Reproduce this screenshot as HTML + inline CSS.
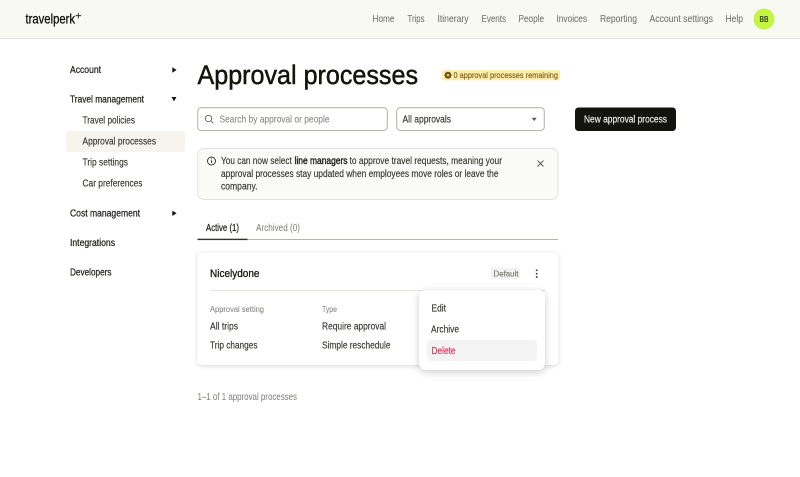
<!DOCTYPE html>
<html lang="en"><head><meta charset="utf-8"><title>Approval processes</title>
<style>
html,body{margin:0;padding:0;background:#fff;width:800px;height:477px;overflow:hidden}
svg{display:block;filter:blur(.25px)}
text{font-family:"Liberation Sans",sans-serif;font-size:9.7px;fill:#72726a;stroke:#72726a;stroke-width:.06;white-space:pre}
.m{fill:#24241f;stroke:#24241f;stroke-width:.24}
.d{fill:#36362f;stroke:#36362f;stroke-width:.14}
.g{fill:#85857e;stroke:#85857e;stroke-width:.06}
</style></head><body>
<svg width="800" height="477" viewBox="0 0 800 477" xmlns="http://www.w3.org/2000/svg">
<defs>
<filter id="s1" x="-10%" y="-10%" width="120%" height="125%"><feDropShadow dx="0" dy="1" stdDeviation="2.5" flood-color="#000" flood-opacity=".16"/></filter>
<filter id="s2" x="-20%" y="-20%" width="140%" height="140%"><feDropShadow dx="0" dy="2" stdDeviation="4" flood-color="#000" flood-opacity=".2"/></filter>
</defs>
<rect width="800" height="38" fill="#f9f9f4"/>
<rect y="38" width="800" height="1" fill="#e6e6e0"/>
<text x="25.5" y="23.5" textLength="49.5" lengthAdjust="spacingAndGlyphs" style="font-size:14px;fill:#14140f;stroke:#14140f;stroke-width:.32">travelperk</text>
<path d="M78.3 13v5.4M75.6 15.700H81" stroke="#14140f" stroke-width=".8" fill="none"/>

<text x="372.5" y="22" textLength="22" lengthAdjust="spacingAndGlyphs">Home</text>
<text x="407.5" y="22" textLength="17" lengthAdjust="spacingAndGlyphs">Trips</text>
<text x="437.5" y="22" textLength="31" lengthAdjust="spacingAndGlyphs">Itinerary</text>
<text x="481.5" y="22" textLength="24.5" lengthAdjust="spacingAndGlyphs">Events</text>
<text x="518.5" y="22" textLength="25.5" lengthAdjust="spacingAndGlyphs">People</text>
<text x="556.5" y="22" textLength="30.5" lengthAdjust="spacingAndGlyphs">Invoices</text>
<text x="600" y="22" textLength="37" lengthAdjust="spacingAndGlyphs">Reporting</text>
<text x="649.5" y="22" textLength="63.5" lengthAdjust="spacingAndGlyphs">Account settings</text>
<text x="725.5" y="22" textLength="17.5" lengthAdjust="spacingAndGlyphs">Help</text>
<circle cx="764" cy="19" r="10.5" fill="#c4f542"/>
<text x="759.5" y="21.8" textLength="9" lengthAdjust="spacingAndGlyphs" style="font-size:8px;font-weight:bold;fill:#33402a;stroke:none">BB</text>

<!-- sidebar -->
<rect x="66" y="131" width="119" height="21" rx="2" fill="#f5f5ee"/>
<text class="m" x="70" y="73" textLength="31" lengthAdjust="spacingAndGlyphs">Account</text>
<text class="m" x="70" y="102.300" textLength="74" lengthAdjust="spacingAndGlyphs">Travel management</text>
<text class="d" x="82.500" y="123.300" textLength="52.500" lengthAdjust="spacingAndGlyphs">Travel policies</text>
<text class="d" x="82.500" y="144.500" textLength="73.500" lengthAdjust="spacingAndGlyphs">Approval processes</text>
<text class="d" x="82.500" y="165.500" textLength="45.500" lengthAdjust="spacingAndGlyphs">Trip settings</text>
<text class="d" x="82.500" y="186.700" textLength="60" lengthAdjust="spacingAndGlyphs">Car preferences</text>
<text class="m" x="70" y="216.300" textLength="70" lengthAdjust="spacingAndGlyphs">Cost management</text>
<text class="m" x="70" y="246" textLength="45" lengthAdjust="spacingAndGlyphs">Integrations</text>
<text class="m" x="70" y="275.500" textLength="41.500" lengthAdjust="spacingAndGlyphs">Developers</text>
<path d="M172.300 67.300l4.300 2.700-4.300 2.700z" fill="#14140f"/>
<path d="M171.500 97l5 0-2.500 4.300z" fill="#14140f"/>
<path d="M172.300 210.600l4.300 2.700-4.300 2.700z" fill="#14140f"/>

<!-- title -->
<text x="197.500" y="84" textLength="220.500" lengthAdjust="spacingAndGlyphs" style="font-size:26.500px;fill:#14140f;stroke:#14140f;stroke-width:.5">Approval processes</text>
<rect x="442" y="70" width="118" height="10.500" rx="2" fill="#fdeeb0"/>
<circle cx="448" cy="75.200" r="3.500" fill="#6d5210"/>
<path d="M446.800 74l2.400 2.400M449.200 74l-2.400 2.400" stroke="#fdeeb0" stroke-width=".7"/>
<text x="453.500" y="78" textLength="104.500" lengthAdjust="spacingAndGlyphs" style="font-size:8.600px;fill:#7f621a;stroke:#7f621a;stroke-width:.16">0 approval processes remaining</text>

<!-- search / select / button -->
<rect x="197.700" y="107.700" width="189.600" height="22.800" rx="3.500" fill="#fff" stroke="#b8b8b0" stroke-width="1.100"/>
<circle cx="208.500" cy="118.500" r="3.200" fill="none" stroke="#66665f" stroke-width=".9"/>
<path d="M210.900 120.900l2.400 2.400" stroke="#66665f" stroke-width=".9"/>
<text x="219.500" y="122.300" textLength="110" lengthAdjust="spacingAndGlyphs" class="g">Search by approval or people</text>
<rect x="396.700" y="107.700" width="147.600" height="22.800" rx="3.500" fill="#fff" stroke="#b8b8b0" stroke-width="1.100"/>
<text class="d" x="402.500" y="122.300" textLength="48.500" lengthAdjust="spacingAndGlyphs">All approvals</text>
<path d="M531.800 117.700h4.800l-2.400 3.400z" fill="#55554f"/>
<rect x="575" y="107.500" width="101" height="23.500" rx="3.500" fill="#14140f"/>
<text x="584" y="122.300" textLength="83" lengthAdjust="spacingAndGlyphs" style="fill:#eeeeea;stroke:#eeeeea;stroke-width:.18">New approval process</text>

<!-- banner -->
<rect x="197.700" y="148.500" width="360.300" height="51" rx="6" fill="#fafaf6" stroke="#e2e2da" stroke-width=".9"/>
<circle cx="211.500" cy="161" r="4" fill="none" stroke="#2c2c28" stroke-width=".9"/>
<path d="M211.500 160.300v2.700" stroke="#2c2c28" stroke-width=".9"/><circle cx="211.500" cy="159" r=".55" fill="#2c2c28"/>
<text class="d" x="221" y="164" textLength="70.800" lengthAdjust="spacingAndGlyphs">You can now select</text>
<text class="m" x="294.500" y="164" textLength="53" lengthAdjust="spacingAndGlyphs" style="stroke-width:.38;fill:#14140f">line managers</text>
<text class="d" x="349.500" y="164" textLength="152.500" lengthAdjust="spacingAndGlyphs">to approve travel requests, meaning your</text>
<text class="d" x="221" y="177" textLength="277.500" lengthAdjust="spacingAndGlyphs">approval processes stay updated when employees move roles or leave the</text>
<text class="d" x="221" y="189.700" textLength="36.500" lengthAdjust="spacingAndGlyphs">company.</text>
<path d="M537.500 160.500l6 6M543.500 160.500l-6 6" stroke="#55554f" stroke-width=".9"/>

<!-- tabs -->
<text class="m" x="206" y="231" textLength="33" lengthAdjust="spacingAndGlyphs">Active (1)</text>
<text x="256" y="231" textLength="44" lengthAdjust="spacingAndGlyphs" class="g">Archived (0)</text>
<rect x="197.500" y="239" width="360.500" height="1" fill="#b5b5aa"/>
<rect x="197.500" y="238.700" width="50" height="1.400" fill="#33332e"/>

<!-- card -->
<rect x="197.500" y="252.500" width="361" height="112.500" rx="5" fill="#fff" filter="url(#s1)"/>
<text x="210" y="277" textLength="49.500" lengthAdjust="spacingAndGlyphs" style="font-size:10.800px;fill:#14140f;stroke:#14140f;stroke-width:.28">Nicelydone</text>
<rect x="491" y="268" width="29" height="11" rx="2" fill="#f2f2f0"/>
<text x="493.500" y="276.400" textLength="25" lengthAdjust="spacingAndGlyphs" style="font-size:8.500px;stroke-width:.12">Default</text>
<circle cx="536.700" cy="270.300" r=".95" fill="#44443f"/><circle cx="536.700" cy="273.700" r=".95" fill="#44443f"/><circle cx="536.700" cy="277" r=".95" fill="#44443f"/>
<rect x="210" y="290" width="335" height="1" fill="#e5e5e0"/>
<text x="210" y="311.800" textLength="54" lengthAdjust="spacingAndGlyphs" class="g" style="font-size:8.600px">Approval setting</text>
<text x="322" y="311.800" textLength="15" lengthAdjust="spacingAndGlyphs" class="g" style="font-size:8.600px">Type</text>
<text class="d" x="210" y="329.500" textLength="28" lengthAdjust="spacingAndGlyphs">All trips</text>
<text class="d" x="322" y="329.500" textLength="64" lengthAdjust="spacingAndGlyphs">Require approval</text>
<text class="d" x="210" y="348.500" textLength="47.500" lengthAdjust="spacingAndGlyphs">Trip changes</text>
<text class="d" x="322" y="348.500" textLength="68.500" lengthAdjust="spacingAndGlyphs">Simple reschedule</text>

<!-- menu -->
<rect x="419" y="290" width="126" height="80" rx="7" fill="#fff" filter="url(#s2)"/>
<text class="d" x="431.500" y="311.500" textLength="14.500" lengthAdjust="spacingAndGlyphs">Edit</text>
<text class="d" x="431" y="332.500" textLength="28" lengthAdjust="spacingAndGlyphs">Archive</text>
<rect x="427" y="340" width="110" height="21" rx="4" fill="#f3f3f3"/>
<text x="431.500" y="353.800" textLength="24" lengthAdjust="spacingAndGlyphs" style="fill:#e8305f;stroke:#e8305f;stroke-width:.16">Delete</text>

<text x="197.500" y="400" textLength="99.500" lengthAdjust="spacingAndGlyphs" class="g">1–1 of 1 approval processes</text>
</svg>
</body></html>
